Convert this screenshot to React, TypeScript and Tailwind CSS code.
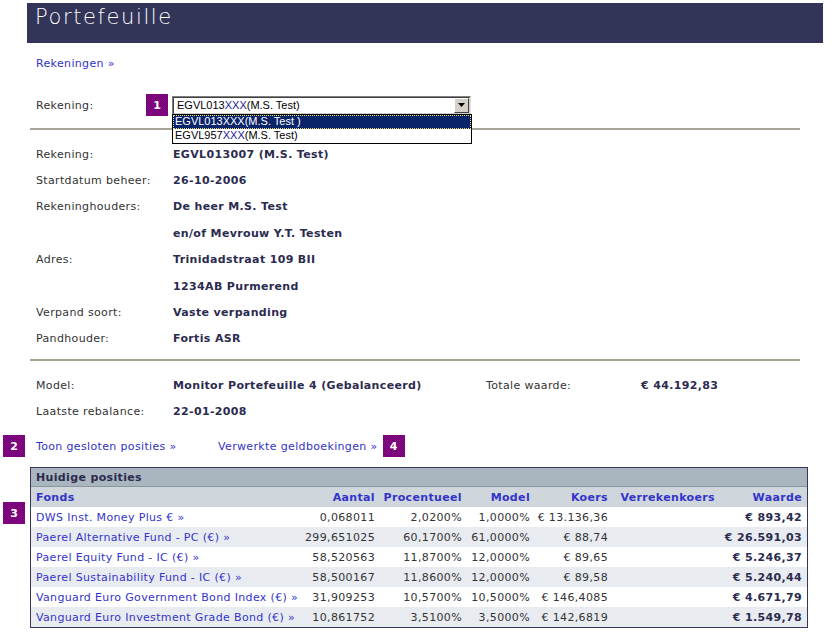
const verdana = "font-['DejaVu_Sans',Verdana,sans-serif]";

function Badge({ n }: { n: string }) {
  return (
    <div className="flex h-[22px] w-[22px] items-center justify-center bg-[#800080] bg-[repeating-conic-gradient(#8c0a8c_0_25%,#6e006e_0_50%)] bg-[length:2px_2px] font-['DejaVu_Sans',sans-serif] text-[11px] font-bold tracking-normal text-white">
      {n}
    </div>
  );
}

function InfoRow({ label, value, h = "h-[26.4px]" }: { label: string; value: string; h?: string }) {
  return (
    <div className={`flex items-center ${h}`}>
      <div className="w-[137px] text-[#333]">{label}</div>
      <div className="font-bold text-[#2b2b4f]">{value}</div>
    </div>
  );
}

function AccountSelect() {
  return (
    <div className="relative h-[19px] w-[299px] font-['Liberation_Sans',Arial,sans-serif] text-[11px] tracking-normal">
      <div className="flex h-full items-center border border-t-[#808080] border-l-[#808080] border-b-[#e0e0e0] border-r-[#e0e0e0] bg-white">
        <div className="flex h-full flex-1 items-center border border-t-[#404040] border-l-[#404040] border-b-[#d4d0c8] border-r-[#d4d0c8] pl-[3px] text-black">
          EGVL013<span className="text-[#1a1a9a]">XXX</span>(M.S. Test)
        </div>
        <div className="absolute right-[2px] top-[2px] flex h-[15px] w-[15px] items-center justify-center border border-t-white border-l-white border-b-[#404040] border-r-[#404040] bg-[#d4d0c8]">
          <svg width="7" height="4" viewBox="0 0 7 4">
            <path d="M0 0h7L3.5 4z" fill="#000" />
          </svg>
        </div>
      </div>
      <div className="absolute left-0 top-[18px] z-10 w-[300px] border border-black bg-white">
        <div className="flex h-[14px] items-center border border-dotted border-[#e8e070] bg-[#0a246a] pl-[1px] text-white">
          EGVL013XXX(M.S. Test )
        </div>
        <div className="flex h-[14px] items-center pl-[2px] text-black">
          EGVL957<span className="text-[#1a1a9a]">XXX</span>(M.S. Test)
        </div>
      </div>
    </div>
  );
}

const rows = [
  ["DWS Inst. Money Plus € »", "0,068011", "2,0200%", "1,0000%", "€ 13.136,36", "€ 893,42"],
  ["Paerel Alternative Fund - PC (€) »", "299,651025", "60,1700%", "61,0000%", "€ 88,74", "€ 26.591,03"],
  ["Paerel Equity Fund - IC (€) »", "58,520563", "11,8700%", "12,0000%", "€ 89,65", "€ 5.246,37"],
  ["Paerel Sustainability Fund - IC (€) »", "58,500167", "11,8600%", "12,0000%", "€ 89,58", "€ 5.240,44"],
  ["Vanguard Euro Government Bond Index (€) »", "31,909253", "10,5700%", "10,5000%", "€ 146,4085", "€ 4.671,79"],
  ["Vanguard Euro Investment Grade Bond (€) »", "10,861752", "3,5100%", "3,5000%", "€ 142,6819", "€ 1.549,78"],
];

function PositionsTable() {
  return (
    <div className="ml-[30px] w-[778px] border border-[#34365a]">
      <div className="flex h-[19px] items-center border-b border-[#8a96a0] bg-[#aab6bf] pl-[5px] font-bold text-[#2b2b4f]">
        Huidige posities
      </div>
      <table className="w-full table-fixed border-collapse">
        <colgroup>
          <col className="w-[271px]" />
          <col className="w-[78px]" />
          <col className="w-[87px]" />
          <col className="w-[68px]" />
          <col className="w-[78px]" />
          <col className="w-[107px]" />
          <col className="w-[87px]" />
        </colgroup>
        <thead>
          <tr className="h-[20px] bg-[#cfd7dd] font-bold text-[#3333cc]">
            <th className="pl-[5px] text-left">Fonds</th>
            <th className="pr-[5px] text-right">Aantal</th>
            <th className="pr-[5px] text-right">Procentueel</th>
            <th className="pr-[5px] text-right">Model</th>
            <th className="pr-[5px] text-right">Koers</th>
            <th className="pr-[5px] text-right">Verrekenkoers</th>
            <th className="pr-[5px] text-right">Waarde</th>
          </tr>
        </thead>
        <tbody>
          {rows.map((r, i) => (
            <tr key={r[0]} className={`h-[20px] ${i % 2 ? "bg-[#e8ecf0]" : "bg-white"}`}>
              <td className="whitespace-nowrap pl-[5px] text-[#3333cc]">{r[0]}</td>
              <td className="pr-[5px] text-right text-[#333]">{r[1]}</td>
              <td className="pr-[5px] text-right text-[#333]">{r[2]}</td>
              <td className="pr-[5px] text-right text-[#333]">{r[3]}</td>
              <td className="pr-[5px] text-right text-[#333]">{r[4]}</td>
              <td className="pr-[5px] text-right"></td>
              <td className="pr-[5px] text-right font-bold text-[#2b2b4f]">{r[5]}</td>
            </tr>
          ))}
        </tbody>
      </table>
    </div>
  );
}

export default function App() {
  return (
    <div className={`min-h-[637px] w-[836px] bg-white pt-[3px] ${verdana} text-[11px] leading-none tracking-[0.35px]`}>
      <div className="ml-[27px] flex h-[40px] w-[796px] items-start bg-[#323458] pl-[8px] pt-[4px] font-['DejaVu_Sans',sans-serif] text-[21px] font-light tracking-[1.6px] text-white">
        Portefeuille
      </div>

      <div className="mt-[10px] flex h-[20px] items-center pl-[36px] text-[#3232c8]">Rekeningen »</div>

      <div className="mt-[21px] flex h-[22px] items-center pl-[36px]">
        <div className="w-[110px] text-[#333]">Rekening:</div>
        <Badge n="1" />
        <div className="ml-[4px]">
          <AccountSelect />
        </div>
      </div>

      <div className="ml-[30px] mt-[12px] h-[2px] w-[770px] bg-[#a8a298]" />

      <div className="mt-[11px] pl-[36px]">
        <InfoRow label="Rekening:" value="EGVL013007 (M.S. Test)" />
        <InfoRow label="Startdatum beheer:" value="26-10-2006" />
        <InfoRow label="Rekeninghouders:" value="De heer M.S. Test" />
        <InfoRow label="" value="en/of Mevrouw Y.T. Testen" />
        <InfoRow label="Adres:" value="Trinidadstraat 109 BII" />
        <InfoRow label="" value="1234AB Purmerend" />
        <InfoRow label="Verpand soort:" value="Vaste verpanding" />
        <InfoRow label="Pandhouder:" value="Fortis ASR" />
      </div>

      <div className="ml-[30px] mt-[7px] h-[2px] w-[770px] bg-[#a8a298]" />

      <div className="mt-[11px] pl-[36px]">
        <div className="flex h-[26px] items-center">
          <div className="w-[137px] text-[#333]">Model:</div>
          <div className="w-[313px] font-bold text-[#2b2b4f]">Monitor Portefeuille 4 (Gebalanceerd)</div>
          <div className="w-[155px] text-[#333]">Totale waarde:</div>
          <div className="font-bold text-[#2b2b4f]">€ 44.192,83</div>
        </div>
        <div className="flex h-[27px] items-center">
          <div className="w-[137px] text-[#333]">Laatste rebalance:</div>
          <div className="font-bold text-[#2b2b4f]">22-01-2008</div>
        </div>
      </div>

      <div className="mt-[10px] flex h-[22px] items-center pl-[3px]">
        <Badge n="2" />
        <div className="ml-[11px] w-[182px] text-[#3232c8]">Toon gesloten posities »</div>
        <div className="text-[#3232c8]">Verwerkte geldboekingen »</div>
        <div className="ml-[5px]">
          <Badge n="4" />
        </div>
      </div>

      <div className="relative mt-[10px]">
        <div className="absolute left-[3px] top-[35px]">
          <Badge n="3" />
        </div>
        <PositionsTable />
      </div>
    </div>
  );
}
